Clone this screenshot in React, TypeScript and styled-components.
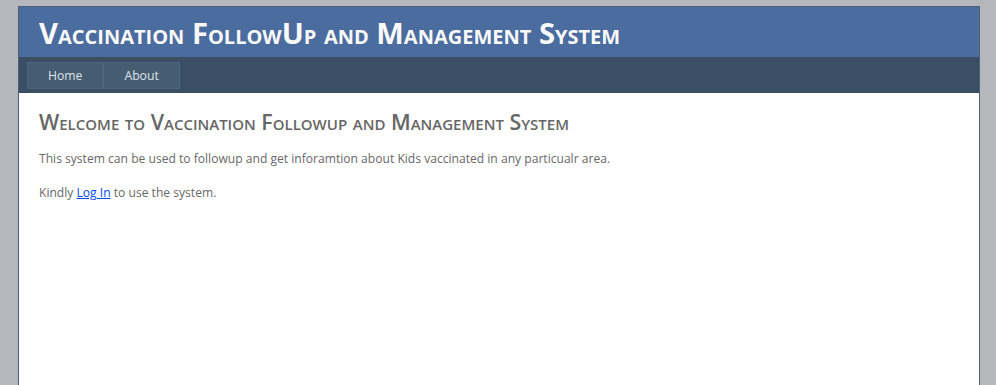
import styled, { createGlobalStyle } from 'styled-components';

const GlobalStyle = createGlobalStyle`
  html, body {
    margin: 0;
    padding: 0;
  }
  body {
    background: #b6b7bc;
    font-size: 12.8px;
    font-family: 'Open Sans', 'Noto Sans', 'Liberation Sans', sans-serif;
    color: #696969;
  }
`;

const Page = styled.div`
  width: 960px;
  background-color: #fff;
  margin: 6px 0 0 18px;
  border: 1px solid #496077;
`;

const Header = styled.div`
  background: #4b6c9e;
  height: 50px;
`;

const Title = styled.h1`
  margin: 0;
  padding: 0 0 0 20px;
  font-size: 29.2px;
  line-height: 52px;
  font-weight: 700;
  font-variant: small-caps;
  color: #f9f9f9;
  white-space: nowrap;
`;

const MenuBar = styled.div`
  background-color: #3a4f63;
  padding: 5px 0 4px 8px;
`;

const Menu = styled.ul`
  list-style: none;
  margin: 0;
  padding: 0;
  display: flex;
`;

const MenuLink = styled.a`
  display: block;
  background-color: #465c71;
  border: 1px solid #4e667d;
  color: #dde4ec;
  font-size: 12.2px;
  line-height: 17px;
  padding: 4px 20px;
  text-decoration: none;
  white-space: nowrap;
`;

const Main = styled.div`
  padding: 0 12px;
  margin: 12px 8px 8px 8px;
  min-height: 420px;
`;

const Heading = styled.h2`
  margin: 0;
  padding-top: 4px;
  font-size: 21.4px;
  line-height: 26px;
  font-weight: 600;
  font-variant: small-caps;
  color: #666666;
`;

const Para = styled.p`
  margin: 13px 0;
  line-height: 21px;
  font-size: 12.1px;
`;

const Link = styled.a`
  color: #034af3;
`;

export default function App() {
  return (
    <>
      <GlobalStyle />
      <Page>
        <Header>
          <Title>Vaccination FollowUp and Management System</Title>
        </Header>
        <MenuBar>
          <Menu>
            <li>
              <MenuLink href="#">Home</MenuLink>
            </li>
            <li>
              <MenuLink href="#">About</MenuLink>
            </li>
          </Menu>
        </MenuBar>
        <Main>
          <Heading>Welcome to Vaccination Followup and Management System</Heading>
          <Para>
            This system can be used to followup and get inforamtion about Kids vaccinated in any particualr area.
          </Para>
          <Para>
            Kindly <Link href="#">Log In</Link> to use the system.
          </Para>
        </Main>
      </Page>
    </>
  );
}
